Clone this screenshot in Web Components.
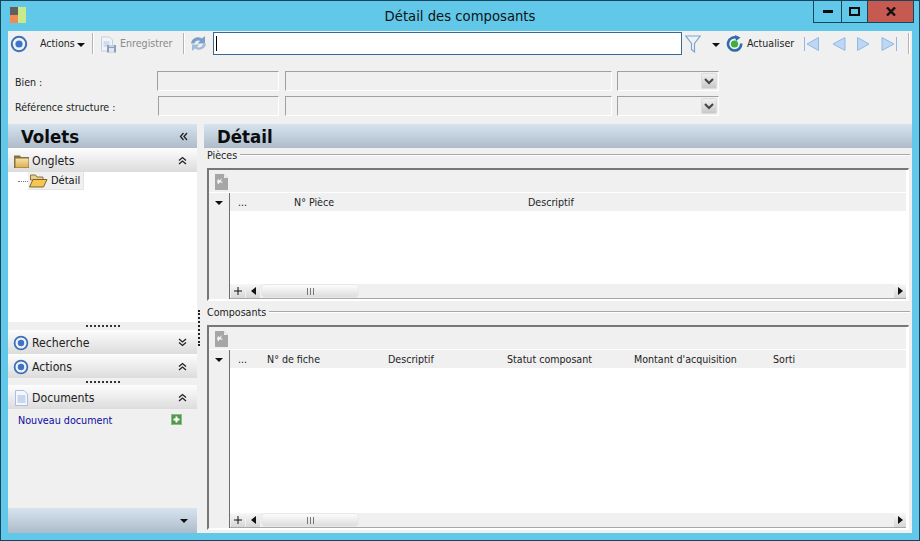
<!DOCTYPE html>
<html lang="fr"><head><meta charset="utf-8"><title>Détail des composants</title>
<style>
html,body{margin:0;padding:0;width:920px;height:541px;overflow:hidden}
body{font:10.600px "DejaVu Sans",sans-serif;font-stretch:condensed;color:#1a1a1a}
</style></head><body>
<win-frame heading="Détail des composants">
  <tool-bar></tool-bar>
  <form-panel></form-panel>
  <main-split>
    <volets-pane slot="left"></volets-pane>
    <pane-head slot="right" big>Détail</pane-head>
    <group-box slot="right" legend="Pièces" style="height:157px;padding-bottom:4px">
      <data-grid cols="...:56,N° Pièce:234,Descriptif:100"></data-grid>
    </group-box>
    <group-box slot="right" legend="Composants" style="height:228px;padding-bottom:3px">
      <data-grid cols="...:29,N° de fiche:121,Descriptif:119,Statut composant:127,Montant d'acquisition:139,Sorti:60"></data-grid>
    </group-box>
  </main-split>
</win-frame>
<script>
const ICONS={
 target:s=>`<svg width="${s}" height="${s}" viewBox="0 0 18 18"><circle cx="9" cy="9" r="7.200" fill="#eef3fb" stroke="#3f6fb5" stroke-width="2"/><circle cx="9" cy="9" r="3.600" fill="#3f74c4"/></svg>`,
 folder:`<svg width="15" height="14" viewBox="0 0 15 14"><defs><linearGradient id="fg" x1="0" y1="0" x2="0" y2="1"><stop offset="0" stop-color="#f6e2a6"/><stop offset="1" stop-color="#dcae52"/></linearGradient></defs><path d="M0 1.500h6l1 1.500h8v11H0z" fill="#85703f"/><path d="M1.500 4.500h13V13.500H1.500z" fill="url(#fg)"/></svg>`,
 open:`<svg width="20" height="14" viewBox="0 0 20 14"><path d="M2.500 1h5l1.500 2h6v3H2.500z" fill="#e9cf8a" stroke="#8b7440"/><path d="M1.500 13 5 5.500h14L15.500 13z" fill="#f7c650" stroke="#7c6430"/></svg>`,
 doc:`<svg width="13" height="16" viewBox="0 0 13 16"><path d="M.5.500h8.500l3.500 3.500v11.500H.5z" fill="#f4f7fc" stroke="#a9bfe0"/><path d="M2.500 6h8M2.500 8h8M2.500 10h8M2.500 12h8" stroke="#9db5da"/></svg>`,
 save:`<svg width="17" height="17" viewBox="0 0 17 17"><path d="M1.500 1h8l3 3v11h-11z" fill="#f0f3f9" stroke="#c3cfe0"/><path d="M3.500 6h6M3.500 8h6M3.500 10h4" stroke="#b4c4dc"/><path d="M7 9h9v7.500H7z" fill="#8d9fc0"/><path d="M9 12h5v4.500H9z" fill="#dfe6f0"/><path d="M9 9h5v2H9z" fill="#c5d0e2"/></svg>`,
 sync:`<svg width="17" height="17" viewBox="0 0 17 17"><path d="M1 8.500C1.500 3 8 .5 12 3.500L15 1v7.500H7.500L10 6C8 4.800 5 6 4.500 8.500z" fill="#7b9fcc"/><path d="M16 8.500C15.500 14 9 16.500 5 13.500L2 16V9.500h7.500L7 12c2 1.200 5.500 0 6-3.500z" fill="#a5bcd9"/></svg>`,
 filter:`<svg width="16" height="18" viewBox="0 0 16 18"><path d="M.8 1h14.400L9.500 8.500v8.500l-3-2.500v-6z" fill="#eaf3fa" stroke="#82a6c8" stroke-width="1.200"/></svg>`,
 refresh:`<svg width="17" height="17" viewBox="0 0 17 17"><path d="M11.500 3A6.600 6.600 0 1 0 15.200 8.500" fill="none" stroke="#2f6cab" stroke-width="2.600"/><path d="M9 0l5.500 2.500-4.500 3.500z" fill="#2f6cab"/><circle cx="8.500" cy="9" r="3.600" fill="#3fae3d"/></svg>`,
 pic:`<svg width="13" height="16" viewBox="0 0 13 16"><path d="M0 0h9l4 4v12H0z" fill="#a6a6a6"/><path d="M9 0l4 4H9z" fill="#ececec"/><path d="M2 7l1.500-2 1 1.500L7 4 6 7l2 2-3-.8-2 2.300z" fill="#f4f4f4"/></svg>`,
 plus:`<svg width="11" height="11" viewBox="0 0 11 11"><rect x=".5" y=".5" width="10" height="10" fill="#4f9a4a" stroke="#8dbb88"/><path d="M5.500 2.500v6M2.500 5.500h6" stroke="#fff" stroke-width="2"/></svg>`,
 dblUp:`<svg width="9" height="9" viewBox="0 0 9 9"><path d="M1 4.500l3.500-3 3.500 3M1 8l3.500-3 3.500 3" fill="none" stroke="#222" stroke-width="1.300"/></svg>`,
 dblDown:`<svg width="9" height="9" viewBox="0 0 9 9"><path d="M1 1l3.500 3 3.500-3M1 4.500l3.500 3 3.500-3" fill="none" stroke="#222" stroke-width="1.300"/></svg>`,
 dblLeft:`<svg width="9" height="9" viewBox="0 0 9 9"><path d="M4.500 1l-3 3.500 3 3.500M8 1l-3 3.500 3 3.500" fill="none" stroke="#222" stroke-width="1.300"/></svg>`,
 caret:`<svg width="8" height="4" viewBox="0 0 8 4"><path d="M0 0h8L4 4z" fill="#111"/></svg>`,
 chev:`<svg width="10" height="7" viewBox="0 0 10 7"><path d="M1 1l4 4 4-4" fill="none" stroke="#444" stroke-width="2"/></svg>`
};
const nav=(d)=>`<svg width="17" height="16" viewBox="0 0 17 16"><path d="${d}" fill="#bcd6f3" stroke="#93b8e4"/></svg>`;
function def(name,css,html){
  customElements.define(name,class extends HTMLElement{
    constructor(){super();this.attachShadow({mode:'open'});}
    connectedCallback(){
      this.shadowRoot.innerHTML=`<style>${css}</style>`+(typeof html==='function'?html(this):html);}
  });
}
def('win-frame',`
 :host{display:flex;flex-direction:column;box-sizing:border-box;width:920px;height:541px;background:#61c8ea;border:1px solid #16455c}
 .title{height:30px;flex:none;display:flex;align-items:flex-start;position:relative}
 .logo{display:grid;grid-template-columns:8px 8px;grid-template-rows:8px 8px;margin:6px 0 0 9px}
 .logo i:nth-child(1){background:#606060}.logo i:nth-child(2){background:#c8ea88;grid-row:1/3;grid-column:2}.logo i:nth-child(3){background:#f08c52}
 h1{position:absolute;left:0;right:0;top:6px;margin:0;text-align:center;font:14.700px "DejaVu Sans",sans-serif;font-stretch:condensed;color:#111}
 .btns{margin-left:auto;margin-right:5px;display:flex;height:21px;border:1px solid #16455c;border-top:0;position:relative}
 .btns div{display:flex;align-items:center;justify-content:center}
 .mn{width:27px;border-right:1px solid #16455c}.mx{width:25px;border-right:1px solid #16455c}.cl{width:45px;background:#c75a50}
 .body{flex:1;min-height:0;margin:0 7px 7px;display:flex;flex-direction:column;background:#f0f0f0}
`,`<div class="title"><div class="logo"><i></i><i></i><i></i></div><h1>Détail des composants</h1>
 <div class="btns"><div class="mn"><svg width="10" height="3"><rect width="10" height="3" fill="#0c0c0c"/></svg></div><div class="mx"><svg width="11" height="9"><rect x="1" y="1" width="9" height="7" fill="none" stroke="#0c0c0c" stroke-width="2"/></svg></div><div class="cl"><svg width="10" height="9" viewBox="0 0 10 9"><path d="M1 .5l8 8M9 .5l-8 8" stroke="#111" stroke-width="2.400"/></svg></div></div></div>
 <div class="body"><slot></slot></div>`);

def('tool-bar',`
 :host{display:block;height:26px;flex:none;position:relative;color:#222}
 .a{position:absolute;display:flex;align-items:center}
 .sep{position:absolute;top:2px;height:21px;width:1px;background:#b4b4b4;border-right:1px solid #fff}
 .in{position:absolute;left:205px;top:1px;width:467px;height:21px;background:#fff;border:1px solid #3a6a94}
 .in i{position:absolute;left:2px;top:3px;width:1px;height:15px;background:#000}
 .dis{color:#8a8a8a}
`,`
 <span class="a" style="left:2px;top:4px">${ICONS.target(18)}</span>
 <span class="a" style="left:32px;top:6px">Actions</span><span class="a" style="left:69px;top:12px">${ICONS.caret}</span>
 <i class="sep" style="left:84px"></i>
 <span class="a" style="left:92px;top:5px">${ICONS.save}</span><span class="a dis" style="left:112px;top:6px">Enregistrer</span>
 <i class="sep" style="left:175px"></i>
 <span class="a" style="left:182px;top:4px">${ICONS.sync}</span>
 <div class="in"><i></i></div>
 <span class="a" style="left:677px;top:4px">${ICONS.filter}</span>
 <span class="a" style="left:704px;top:12px">${ICONS.caret}</span>
 <span class="a" style="left:718px;top:4px">${ICONS.refresh}</span>
 <span class="a" style="left:739px;top:6px">Actualiser</span>
 <span class="a" style="left:795px;top:5px">${nav('M1.500 1v14M15.500 1.500v13L4 8z')}</span>
 <span class="a" style="left:822px;top:5px">${nav('M15 1.500v13L3 8z')}</span>
 <span class="a" style="left:847px;top:5px">${nav('M2.500 1.500v13L14 8z')}</span>
 <span class="a" style="left:873px;top:5px">${nav('M15.500 1v14M1 1.500v13L13 8z')}</span>
 <i class="sep" style="left:900px"></i>`);

def('form-panel',`
 :host{display:grid;grid-template-columns:136px 122px 327px 101px;grid-auto-rows:20px;column-gap:6px;row-gap:5px;height:67px;flex:none;box-sizing:border-box;padding:14px 0 0 7px;color:#222;align-items:center}
 span.t{position:relative;top:1px}
 .f{box-sizing:border-box;height:20px;border:1px solid #fff;border-top-color:#a0a0a0;border-left-color:#a0a0a0;position:relative;display:block}
 .k{margin-left:-1px}
 .c{box-sizing:border-box;position:absolute;right:1px;top:1px;width:16px;height:16px;background:linear-gradient(#f0f0f0,#c8c8c8);border:1px solid #dcdcdc;border-radius:2px;display:flex;align-items:center;justify-content:center}
 .r2{margin-left:1px}
`,`<span class="t">Bien :</span><i class="f"></i><i class="f"></i><i class="f k"><span class="c">${ICONS.chev}</span></i>
 <span class="t">Référence structure :</span><i class="f r2"></i><i class="f"></i><i class="f k"><span class="c">${ICONS.chev}</span></i>`);

def('main-split',`
 :host{display:flex;flex:1;min-height:0}
 .l{width:189px;flex:none;display:flex;flex-direction:column}
 .m{width:7px;flex:none;position:relative}
 .m i{position:absolute;border-left:2px dotted #222;left:1px;top:186px;height:36px}
 .r{width:708px;flex:none;display:flex;flex-direction:column}
`,`<div class="l"><slot name="left"></slot></div><div class="m"><i></i></div><div class="r"><slot name="right"></slot></div>`);

def('pane-head',`
 :host{display:flex;align-items:center;height:24px;flex:none;box-sizing:border-box;background:linear-gradient(#d6e4f0,#aebbc9);font:bold 18.500px "DejaVu Sans",sans-serif;font-stretch:condensed;color:#0c0c0c;padding-left:13px}
 .e{margin-left:auto;margin-right:9px;display:flex}
`,`<slot></slot><span class="e"><slot name="end"></slot></span>`);

def('acc-head',`
 :host{display:flex;align-items:center;height:24px;flex:none;box-sizing:border-box;background:linear-gradient(#fdfdfd,#dcdcdc);font-size:12.200px;color:#222;padding:1px 0 0 4px}
 .i{width:20px;display:flex;justify-content:center;margin-left:-1px;margin-right:1px}
 .e{margin-left:auto;margin-right:10px;display:flex}
`,`<span class="i"><slot name="icon"></slot></span><slot></slot><span class="e"><slot name="end"></slot></span>`);

def('grip-bar',`:host{display:flex;justify-content:center;align-items:center;height:8px;flex:none;background:#f0f0f0}
 i{width:34px;border-top:2px dotted #333}`,`<i></i>`);

def('volets-pane',`
 :host{display:flex;flex-direction:column;flex:1;min-height:0}
 .tree{height:150px;flex:none;background:#fff;position:relative}
 .node{display:inline-flex;align-items:center;height:18px;margin-left:20px;padding-right:3px;background:#f0f0f0;border:1px solid #e4e4e4;border-width:0 1px 1px 0;box-sizing:border-box;position:absolute;top:0;color:#111;gap:3px;font-size:11px}
 .dots{position:absolute;left:10px;top:9px;width:10px;border-top:1px dotted #777}
 .docs{flex:1;padding:5px 0 0 10px;display:flex;align-items:flex-start;color:#0b0ba0;font-size:10.700px}
 .docs .p{margin-left:auto;margin-right:15px;display:flex}
 .foot{height:25px;flex:none;background:linear-gradient(#d6e4f0,#aebbc9);display:flex;align-items:center;justify-content:flex-end;padding-right:9px}
 [slot=icon],[slot=end]{display:flex}
`,`<pane-head>Volets<span slot="end">${ICONS.dblLeft}</span></pane-head>
 <acc-head><span slot="icon">${ICONS.folder}</span>Onglets<span slot="end">${ICONS.dblUp}</span></acc-head>
 <div class="tree"><i class="dots"></i><div class="node">${ICONS.open}<span>Détail</span></div></div>
 <grip-bar></grip-bar>
 <acc-head><span slot="icon">${ICONS.target(16)}</span>Recherche<span slot="end">${ICONS.dblDown}</span></acc-head>
 <acc-head><span slot="icon">${ICONS.target(16)}</span>Actions<span slot="end">${ICONS.dblUp}</span></acc-head>
 <grip-bar style="height:7px"></grip-bar>
 <acc-head><span slot="icon">${ICONS.doc}</span>Documents<span slot="end">${ICONS.dblUp}</span></acc-head>
 <div class="docs"><span>Nouveau document</span><span class="p">${ICONS.plus}</span></div>
 <div class="foot">${ICONS.caret}</div>`);

def('group-box',`
 :host{display:flex;flex-direction:column;flex:none;box-sizing:border-box;padding:0 2px 0 3px}
 .lg{display:flex;align-items:center;height:14px;flex:none;color:#222}
 .lg::after{content:"";flex:1;margin-left:3px;height:1px;background:#a8a8a8;border-bottom:1px solid #fff}
 .c{flex:1;min-height:0;display:flex;margin-top:6px}
`,h=>`<div class="lg">${h.getAttribute('legend')}</div><div class="c"><slot></slot></div>`);

def('data-grid',`
 :host{display:flex;flex-direction:column;flex:1;box-sizing:border-box;border-top:2px solid #777;border-left:2px solid #777;border-right:1px solid #fff;border-bottom:2px solid #fff;background:#fff;margin-right:1px;min-width:0}
 .tb{height:23px;flex:none;background:#f0f0f0;padding:4px 0 0 6px;box-sizing:border-box;margin-right:2px;border-bottom:1px solid #fff;display:flex;align-items:flex-start}
 .main{flex:1;min-height:0;display:flex}
 .gut{width:20px;flex:none;background:#f0f0f0;border-right:1px solid #6e6e6e;display:flex;justify-content:center;padding-top:8px}
 .gut span{display:flex;align-items:flex-start}
 .right{flex:1;min-width:0;display:flex;flex-direction:column}
 .hd{height:18px;flex:none;background:#f0f0f0;margin-right:2px;display:flex;align-items:center;padding-left:8px;color:#222;white-space:nowrap}
 .hd span{flex:none}
 .rows{flex:1}
 .sb{height:15px;box-sizing:border-box;flex:none;margin-right:2px;display:flex;align-items:stretch;background:#f0f0f0;border-bottom:1px solid #a8a8a8}
 .b{width:14px;display:flex;align-items:center;justify-content:center;background:linear-gradient(#f8f8f8,#d6d6d6);flex:none}
 .th{width:98px;margin-left:1px;border-radius:5px;background:linear-gradient(#ffffff,#dadada);display:flex;align-items:center;justify-content:center;box-shadow:0 0 0 1px #e8e8e8 inset}
 .th i{width:7px;height:7px;background:repeating-linear-gradient(90deg,#777 0 1px,transparent 1px 3px)}
`,h=>{
 const cols=(h.getAttribute('cols')||'').split(',').map(c=>{const i=c.lastIndexOf(':');return [c.slice(0,i),c.slice(i+1)]});
 return `<div class="tb">${ICONS.pic}</div><div class="main"><div class="gut"><span>${ICONS.caret}</span></div><div class="right">
 <div class="hd">${cols.map(([t,w])=>`<span style="width:${w}px">${t}</span>`).join('')}</div><div class="rows"></div>
 <div class="sb"><span class="b" style="margin-left:1px"><svg width="8" height="8"><path d="M4 0v8M0 4h8" stroke="#111"/></svg></span><span class="b" style="margin-left:1px"><svg width="5" height="8"><path d="M5 0v8L0 4z" fill="#111"/></svg></span><span class="th"><i></i></span><span style="flex:1"></span><span class="b" style="width:12px"><svg width="5" height="8"><path d="M0 0v8l5-4z" fill="#111"/></svg></span></div>
 </div></div>`});
</script>
</body></html>
